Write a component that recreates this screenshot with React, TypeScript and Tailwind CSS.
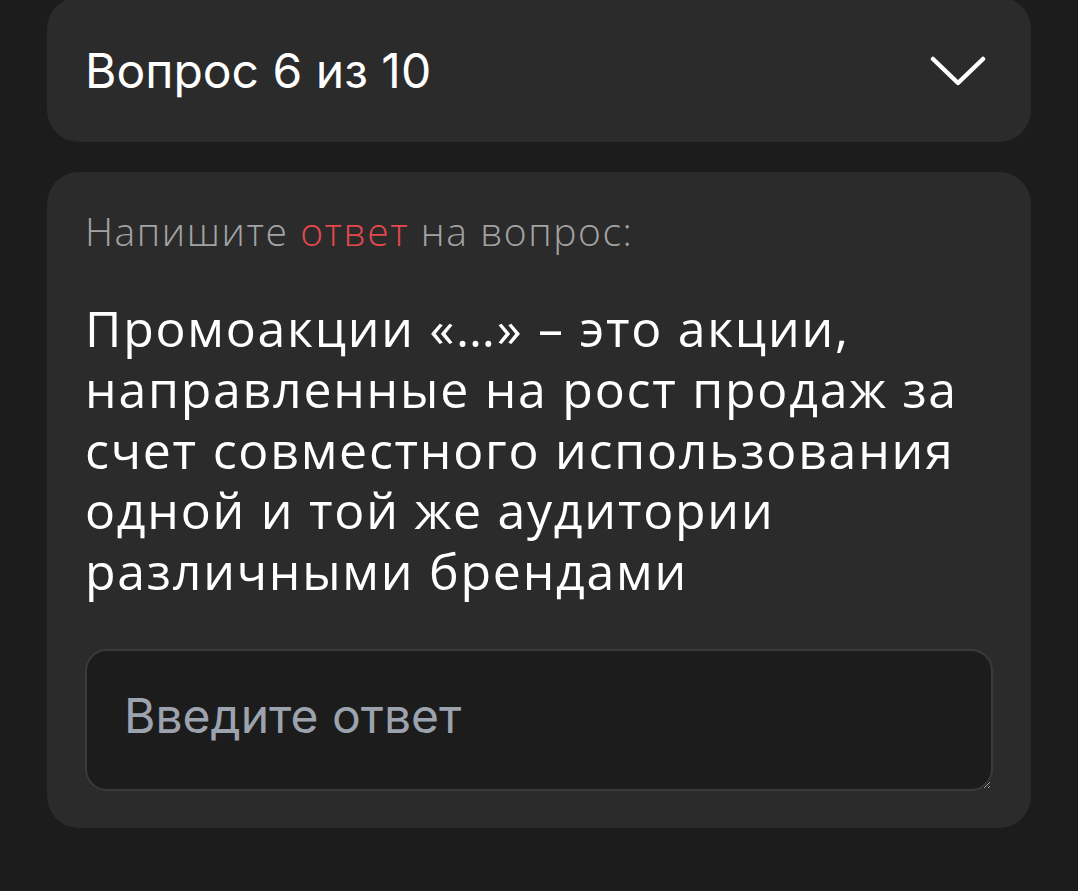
export default function App() {
  return (
    <div className="min-h-screen bg-[#1c1c1c] px-[47px] font-['Inter',sans-serif]">
      <div className="-mt-[3px] flex h-[145px] items-center justify-between rounded-[32px] bg-[#2b2b2b] pl-[38px] pr-[45px] pt-[3px]">
        <span className="text-[48px] leading-none text-white">Вопрос 6 из 10</span>
        <svg width="56" height="32" viewBox="0 0 56 32" fill="none" className="text-white">
          <path d="M3 4 L28 28 L53 4" stroke="currentColor" strokeWidth="4.5" strokeLinecap="round" strokeLinejoin="round" />
        </svg>
      </div>

      <div className="mt-[30px] rounded-[32px] bg-[#2b2b2b] px-[38px] pb-[37px] pt-[36px]">
        <p className="font-['Open_Sans',sans-serif] text-[39px] font-light leading-[46px] tracking-[0.04em] text-[#a3a3a3]">
          Напишите <span className="text-[#e5484d]">ответ</span> на вопрос:
        </p>
        <p className="mt-[44px] font-['Open_Sans',sans-serif] text-[50px] leading-[60.75px] tracking-[0.035em] text-white">
          Промоакции «…» – это акции, направленные на рост продаж за счет совместного использования одной и той же аудитории различными брендами
        </p>
        <textarea
          placeholder="Введите ответ"
          className="mt-[47px] block h-[142px] w-full rounded-[22px] border-2 border-[#3a3a3a] bg-[#1c1c1c] px-[37px] pt-[39px] text-[48px] leading-[52px] text-white outline-none placeholder:text-[#9ca3af]"
        />
      </div>
    </div>
  )
}
